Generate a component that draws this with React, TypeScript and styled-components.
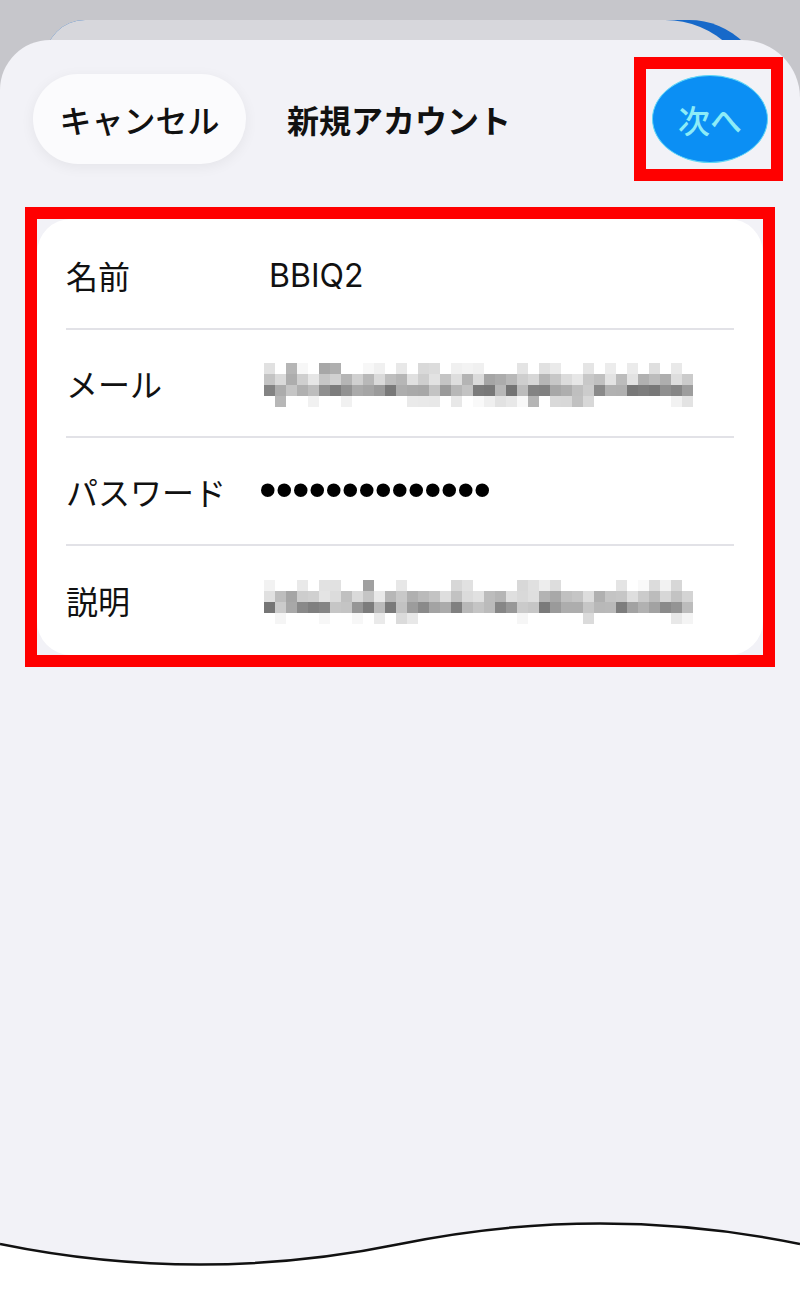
import React from 'react';
import styled, { createGlobalStyle } from 'styled-components';

const GlobalStyle = createGlobalStyle`
  * { box-sizing: border-box; }
  body {
    margin: 0;
    background: #c6c6cb;
    font-family: "Noto Sans CJK JP", "Noto Sans", sans-serif;
  }
`;

// seeded pseudo random, so the mosaic looks the same every run
const makeRand = (seed: number) => {
  let s = seed;
  return () => {
    s = (s * 1103515245 + 12345) % 2147483648;
    return s / 2147483648;
  };
};

const buildMosaic = (seed: number) => {
  const rand = makeRand(seed);
  const cols = 39;
  const cells: { x: number; y: number; c: string }[] = [];
  for (let r = 0; r < 4; r++) {
    for (let c = 0; c < cols; c++) {
      const v = rand();
      let g: number;
      if (r === 0 || r === 3) {
        if (v < 0.55) continue;
        g = 215 + Math.floor(rand() * 35);
        if (v > 0.93) g = 160 + Math.floor(rand() * 40);
      } else if (r === 1) {
        g = 165 + Math.floor(rand() * 70);
      } else {
        g = 115 + Math.floor(rand() * 90);
      }
      const hex = Math.min(g, 250).toString(16).padStart(2, '0');
      cells.push({ x: c * 11, y: r * 11, c: `#${hex}${hex}${hex}` });
    }
  }
  return cells;
};

const Mosaic = ({ seed }: { seed: number }) => {
  const cells = buildMosaic(seed);
  return (
    <svg width="430" height="44" viewBox="0 0 430 44">
      {cells.map((cell, i) => (
        <rect key={i} x={cell.x} y={cell.y} width="11" height="11" fill={cell.c} />
      ))}
    </svg>
  );
};

const Screen = styled.div`
  position: relative;
  height: 1300px;
  overflow: hidden;
  padding-top: 40px;
`;

const BlueSheet = styled.div`
  position: absolute;
  top: 20px;
  left: 45px;
  width: 722px;
  height: 200px;
  border-radius: 40px 78px 0 0;
  background: #1769c9;
`;

const BackSheet = styled.div`
  position: absolute;
  top: 20px;
  left: 45px;
  width: 712px;
  height: 200px;
  border-radius: 40px 92px 0 0;
  background: #d7d7dc;
`;

const Sheet = styled.div`
  position: relative;
  height: 1260px;
  background: #f2f2f7;
  border-radius: 50px 58px 0 0;
  display: flex;
  flex-direction: column;
  padding-top: 17px;
`;

const Header = styled.div`
  display: flex;
  align-items: center;
  padding: 0 17px 0 33px;
`;

const CancelButton = styled.div`
  width: 213px;
  height: 90px;
  border-radius: 45px;
  background: #fbfbfd;
  box-shadow: 0 3px 14px rgba(0, 0, 0, 0.06);
  display: flex;
  align-items: center;
  justify-content: center;
  font-size: 32px;
  font-weight: 500;
  color: #111;
`;

const Title = styled.div`
  margin-left: 41px;
  font-size: 32px;
  font-weight: 700;
  color: #111;
  flex: 1;
`;

const Highlight = styled.div<{ $pad: string }>`
  border: 12px solid #ff0000;
  padding: ${(p) => p.$pad};
`;

const NextButton = styled.div`
  width: 116px;
  height: 88px;
  border-radius: 50%;
  background: #0b8ff4;
  border: 1.5px solid #5fd6f6;
  display: flex;
  align-items: center;
  justify-content: center;
  font-size: 32px;
  font-weight: 500;
  color: #8decf7;
`;

const FormFrame = styled.div`
  margin: 26px 25px 0;
`;

const Card = styled.div`
  background: #ffffff;
  border-radius: 34px;
  height: 436px;
  padding-top: 3px;
`;

const Row = styled.div<{ $last?: boolean }>`
  height: 108px;
  margin: 0 29px;
  display: flex;
  align-items: center;
  border-bottom: ${(p) => (p.$last ? 'none' : '2px solid #e2e2e7')};
`;

const Label = styled.div`
  width: 198px;
  font-size: 32px;
  color: #111;
`;

const Value = styled.div`
  font-family: Inter, "Noto Sans", sans-serif;
  font-size: 32px;
  color: #111;
  padding-left: 5px;
`;

const Dots = styled.div`
  font-family: "Liberation Sans", Arial, sans-serif;
  font-size: 50px;
  line-height: 1;
  letter-spacing: -1px;
  color: #000;
  margin-left: -5px;
  margin-top: -2px;
`;

const Blur = styled.div`
  display: flex;
  margin-top: 4px;
`;

const Wave = styled.svg`
  margin-top: auto;
  display: block;
`;

export default function App() {
  return (
    <>
      <GlobalStyle />
      <Screen>
        <BlueSheet />
        <BackSheet />
        <Sheet>
          <Header>
            <CancelButton>キャンセル</CancelButton>
            <Title>新規アカウント</Title>
            <Highlight $pad="6px 3px 6px 6px">
              <NextButton>次へ</NextButton>
            </Highlight>
          </Header>
          <FormFrame>
            <Highlight $pad="0">
              <Card>
                <Row>
                  <Label>名前</Label>
                  <Value>BBIQ2</Value>
                </Row>
                <Row>
                  <Label>メール</Label>
                  <Blur>
                    <Mosaic seed={7} />
                  </Blur>
                </Row>
                <Row>
                  <Label>パスワード</Label>
                  <Dots>••••••••••••••</Dots>
                </Row>
                <Row $last>
                  <Label>説明</Label>
                  <Blur>
                    <Mosaic seed={31} />
                  </Blur>
                </Row>
              </Card>
            </Highlight>
          </FormFrame>
          <Wave width="800" height="100" viewBox="0 0 800 100">
            <path d="M0 44 Q200 85 400 44 T800 44 L800 100 L0 100 Z" fill="#ffffff" />
            <path d="M0 44 Q200 85 400 44 T800 44" fill="none" stroke="#111" strokeWidth="2.5" />
          </Wave>
        </Sheet>
      </Screen>
    </>
  );
}
